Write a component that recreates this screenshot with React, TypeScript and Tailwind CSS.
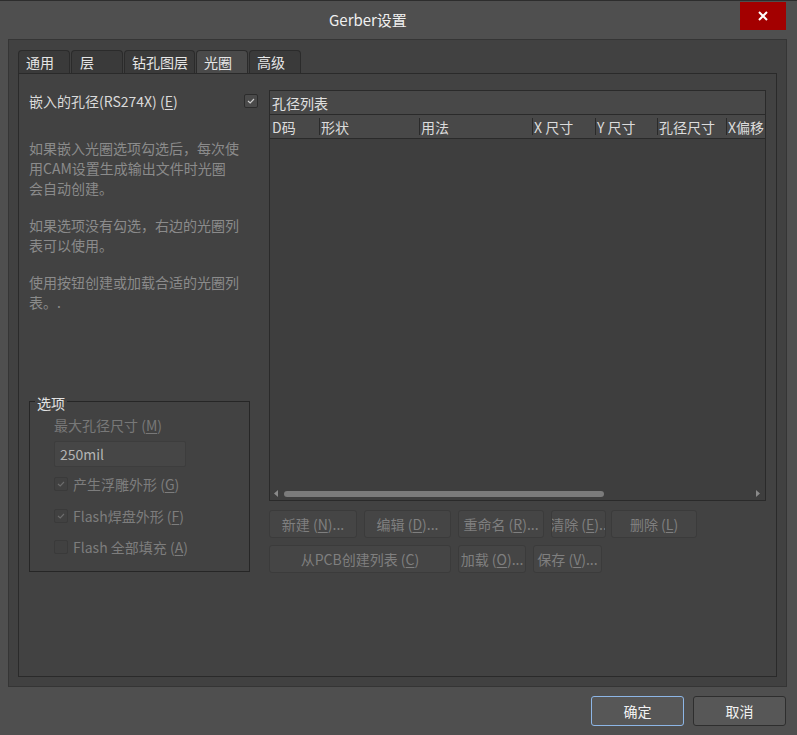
import React from "react";

const U = ({ children }: { children: React.ReactNode }) => (
  <span className="underline underline-offset-[2px] decoration-1">{children}</span>
);

const Check = ({ on, dim }: { on: boolean; dim?: boolean }) => (
  <div
    className={`w-[14px] h-[14px] rounded-[2px] border flex items-center justify-center ${
      dim ? "bg-[#414141] border-[#3a3a3a]" : "bg-[#4a4a4a] border-[#2c2c2c]"
    }`}
  >
    {on && (
      <svg width="10" height="10" viewBox="0 0 10 10">
        <polyline
          points="2,5 4.2,7 8,3"
          fill="none"
          stroke={dim ? "#6c6c6c" : "#cfcfcf"}
          strokeWidth="1.1"
        />
      </svg>
    )}
  </div>
);

const tabs = [
  { label: "通用", w: "w-[52px]", pl: "pl-[7px]" },
  { label: "层", w: "w-[52px]", pl: "pl-[8px]" },
  { label: "钻孔图层", w: "w-[71px]", pl: "pl-[7px]" },
  { label: "光圈", w: "w-[52px]", pl: "pl-[7px]", active: true },
  { label: "高级", w: "w-[52px]", pl: "pl-[7px]" },
];

const cols = [
  { label: "D码", w: "w-[49px]", first: true },
  { label: "形状", w: "w-[100px]" },
  { label: "用法", w: "w-[113px]" },
  { label: "X 尺寸", w: "w-[63px]" },
  { label: "Y 尺寸", w: "w-[62px]" },
  { label: "孔径尺寸", w: "w-[69px]" },
  { label: "X偏移", w: "w-[60px]" },
];

const Btn = ({ w, children }: { w: string; children: React.ReactNode }) => (
  <div
    className={`${w} h-[28px] shrink-0 rounded-[3px] border border-[#3b3b3b] bg-[#454545] text-[#7f7f7f] flex items-center justify-center whitespace-nowrap overflow-hidden`}
  >
    {children}
  </div>
);

export default function App() {
  return (
    <div className="w-[797px] h-[735px] overflow-hidden bg-[#4f4f4f] border-t border-[#2d2d2d] font-[family-name:'Noto_Sans_CJK_SC','Noto_Sans',sans-serif] text-[14px] leading-[20px] select-none">
      {/* title bar */}
      <div className="h-[38px] flex items-start">
        <span className="ml-[329px] mt-[8px] text-[15px] leading-[22px] text-[#f0f0f0]">Gerber设置</span>
        <div className="ml-auto mr-[11px] mt-[1px] w-[46px] h-[28px] bg-[#a30000] flex items-center justify-center">
          <svg width="10" height="10" viewBox="0 0 10 10">
            <path d="M1 1 L9 9 M9 1 L1 9" stroke="#ffffff" strokeWidth="2" />
          </svg>
        </div>
      </div>

      {/* outer frame */}
      <div className="ml-[8px] w-[779px] h-[648px] bg-[#414141] border border-[#353535] pl-[9px] pt-[10px]">
        <div className="flex gap-[1px] h-[23px]">
          {tabs.map((t) => (
            <div
              key={t.label}
              className={`${t.w} ${t.pl} h-[23px] rounded-t-[4px] border border-b-0 border-[#2b2b2b] text-[#e6e6e6] flex items-center ${
                t.active ? "bg-[#4a4a4a]" : "bg-[#3a3a3a]"
              }`}
            >
              {t.label}
            </div>
          ))}
        </div>

        {/* tab page */}
        <div className="w-[759px] h-[604px] border border-[#2a2a2a] bg-[#424242] flex items-start">
          {/* left column */}
          <div className="ml-[10px] w-[230px] pt-[17px]">
            <div className="h-[20px] flex items-center justify-between">
              <span className="text-[#dadada]">
                嵌入的孔径(RS274X) (<U>E</U>)
              </span>
              <div className="mr-[1px]">
                <Check on />
              </div>
            </div>
            <div className="mt-[27px] text-[#8b8b8b] w-[215px] whitespace-nowrap">
              <p>
                如果嵌入光圈选项勾选后，每次使
                <br />
                用CAM设置生成输出文件时光圈
                <br />
                会自动创建。
              </p>
              <p className="mt-[17px]">
                如果选项没有勾选，右边的光圈列
                <br />
                表可以使用。
              </p>
              <p className="mt-[17px]">
                使用按钮创建或加载合适的光圈列
                <br />
                表。.
              </p>
            </div>

            {/* options group */}
            <div className="relative mt-[89px] w-[221px] h-[171px] border border-[#262626] pl-[24px] pt-[13px]">
              <span className="absolute top-[-9px] left-[5px] px-[2px] bg-[#424242] text-[#e2e2e2]">选项</span>
              <div className="text-[#787878]">
                最大孔径尺寸 (<U>M</U>)
              </div>
              <div className="mt-[6px] w-[132px] h-[26px] rounded-[2px] border border-[#3d3d3d] bg-[#464646] text-[#b4b4b4] pl-[5px] flex items-center">
                250mil
              </div>
              <div className="mt-[7px] h-[20px] flex items-center gap-[5px] text-[#7d7d7d]">
                <Check on dim />
                <span>
                  产生浮雕外形 (<U>G</U>)
                </span>
              </div>
              <div className="mt-[12px] h-[20px] flex items-center gap-[5px] text-[#7d7d7d]">
                <Check on dim />
                <span>
                  Flash焊盘外形 (<U>F</U>)
                </span>
              </div>
              <div className="mt-[11px] h-[20px] flex items-center gap-[5px] text-[#7d7d7d]">
                <Check on={false} dim />
                <span>
                  Flash 全部填充 (<U>A</U>)
                </span>
              </div>
            </div>
          </div>

          {/* right column */}
          <div className="ml-[10px] pt-[16px]">
            <div className="w-[497px] h-[411px] border border-[#2a2a2a] bg-[#3e3e3e] flex flex-col">
              <div className="h-[24px] bg-[#484848] border-b border-[#2a2a2a] pl-[2px] flex items-center text-[#e0e0e0]">
                孔径列表
              </div>
              <div className="h-[24px] bg-[#484848] border-b border-[#2a2a2a] flex items-center overflow-hidden text-[#dcdcdc]">
                {cols.map((c) => (
                  <div
                    key={c.label}
                    className={`${c.w} shrink-0 h-[17px] flex items-center whitespace-nowrap ${
                      c.first ? "pl-[2px]" : "border-l border-[#2a2a2a] pl-[1px]"
                    }`}
                  >
                    {c.label}
                  </div>
                ))}
              </div>
              <div className="flex-1" />
              <div className="h-[13px] flex items-center px-[4px]">
                <svg width="5" height="7" viewBox="0 0 5 7">
                  <path d="M4 0 L0 3.5 L4 7 Z" fill="#8a8a8a" />
                </svg>
                <div className="ml-[5px] w-[320px] h-[6px] rounded-full bg-[#7b7b7b]" />
                <div className="flex-1" />
                <svg width="5" height="7" viewBox="0 0 5 7" className="mr-[1px]">
                  <path d="M1 0 L5 3.5 L1 7 Z" fill="#8a8a8a" />
                </svg>
              </div>
            </div>

            <div className="mt-[9px] flex">
              <Btn w="w-[88px]">
                新建 (<U>N</U>)...
              </Btn>
              <div className="ml-[7px]">
                <Btn w="w-[87px]">
                  编辑 (<U>D</U>)...
                </Btn>
              </div>
              <div className="ml-[7px]">
                <Btn w="w-[86px]">
                  重命名 (<U>R</U>)...
                </Btn>
              </div>
              <div className="ml-[7px]">
                <Btn w="w-[55px]">
                  清除 (<U>E</U>)..
                </Btn>
              </div>
              <div className="ml-[5px]">
                <Btn w="w-[86px]">
                  删除 (<U>L</U>)
                </Btn>
              </div>
            </div>
            <div className="mt-[7px] flex">
              <Btn w="w-[182px]">
                从PCB创建列表 (<U>C</U>)
              </Btn>
              <div className="ml-[7px]">
                <Btn w="w-[68px]">
                  加载 (<U>O</U>)...
                </Btn>
              </div>
              <div className="ml-[7px]">
                <Btn w="w-[69px]">
                  保存 (<U>V</U>)...
                </Btn>
              </div>
            </div>
          </div>
        </div>
      </div>

      {/* footer */}
      <div className="mt-[9px] flex justify-end gap-[9px] pr-[11px]">
        <div className="w-[93px] h-[30px] rounded-[3px] border border-[#8db6e6] bg-[#575757] text-[#f2f2f2] flex items-center justify-center">
          确定
        </div>
        <div className="w-[93px] h-[30px] rounded-[3px] border border-[#2e2e2e] bg-[#575757] text-[#f2f2f2] flex items-center justify-center">
          取消
        </div>
      </div>
    </div>
  );
}
